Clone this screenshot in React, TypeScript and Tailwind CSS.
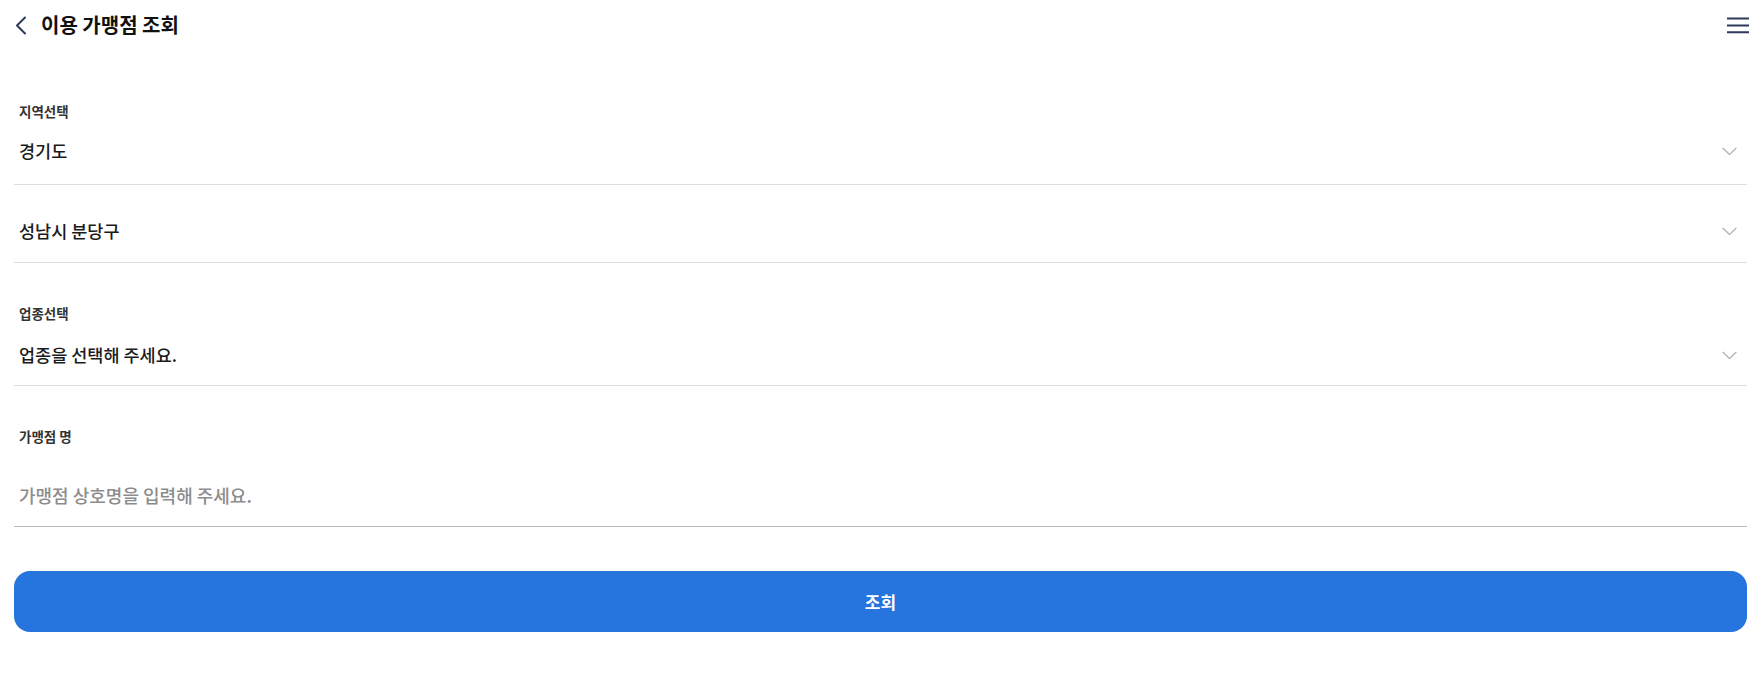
const font = { fontFamily: '"Noto Sans CJK KR", "Noto Sans", sans-serif' };

function Chevron() {
  return (
    <svg width="15" height="9" viewBox="0 0 15 9" fill="none" className="mr-[10px] shrink-0">
      <path d="M1 1.2l6.5 6.3L14 1.2" stroke="#b5b5b5" strokeWidth="1.4" strokeLinecap="round" strokeLinejoin="round" />
    </svg>
  );
}

function SelectRow({ value, className }: { value: string; className: string }) {
  return (
    <div className={`flex items-center justify-between border-b border-[#dedede] pl-[5px] ${className}`}>
      <span className="text-[17.5px] leading-[24px] font-medium text-[#1b1b1b]">{value}</span>
      <Chevron />
    </div>
  );
}

function Label({ text }: { text: string }) {
  return <div className="pl-[5px] text-[13.5px] leading-[20px] font-bold text-[#333]">{text}</div>;
}

export default function App() {
  return (
    <div className="min-h-[687px] w-full bg-white" style={font}>
      <header className="flex h-[50px] items-center justify-between pl-[14px] pr-[14px]">
        <div className="flex items-center gap-[13px]">
          <svg width="14" height="19" viewBox="0 0 14 19" fill="none">
            <path d="M11 1.5L3 9.5l8 8" stroke="#2e3a5a" strokeWidth="2" strokeLinecap="round" strokeLinejoin="round" />
          </svg>
          <h1 className="text-[20px] leading-[26px] font-bold text-[#111]">이용 가맹점 조회</h1>
        </div>
        <svg width="24" height="17" viewBox="0 0 24 17" fill="none">
          <path d="M1 1.5h22M1 8.5h22M1 15.2h22" stroke="#2e3a5a" strokeWidth="2" />
        </svg>
      </header>

      <main className="pl-[14px] pr-[17px]">
        <section className="mt-[51px]">
          <Label text="지역선택" />
          <SelectRow value="경기도" className="pt-[18px] pb-[21px]" />
          <SelectRow value="성남시 분당구" className="pt-[34px] pb-[19px]" />
        </section>

        <section className="mt-[40px]">
          <Label text="업종선택" />
          <SelectRow value="업종을 선택해 주세요." className="pt-[20px] pb-[18px]" />
        </section>

        <section className="mt-[40px]">
          <Label text="가맹점 명" />
          <div className="border-b border-[#b9b9b9] pl-[5px] pt-[37px] pb-[19px]">
            <input
              className="block h-[24px] w-full bg-transparent text-[18px] leading-[24px] font-medium text-[#1b1b1b] outline-none placeholder:text-[#8c8c8c]"
              placeholder="가맹점 상호명을 입력해 주세요."
              style={font}
            />
          </div>
        </section>

        <button
          className="mt-[44px] flex h-[61px] w-full items-center justify-center rounded-[16px] bg-[#2675df] text-[17px] font-bold text-white"
          style={font}
        >
          조회
        </button>
      </main>
    </div>
  );
}
